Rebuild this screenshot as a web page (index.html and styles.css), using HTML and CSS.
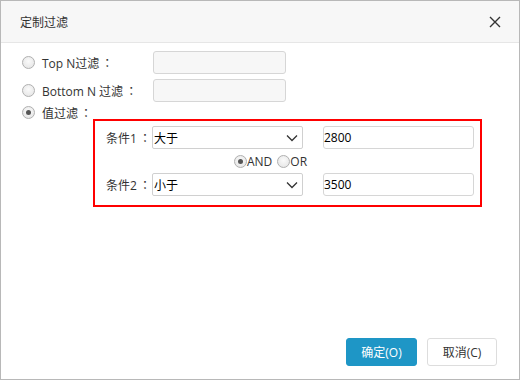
FILE: index.html
```html
<!DOCTYPE html>
<html lang="zh-CN">
<head>
    <meta charset="UTF-8">
    <title>定制过滤</title>
    <link rel="stylesheet" href="styles.css">
</head>
<body>

<div class="dialog">
    <div class="header">
        <span class="title">定制过滤</span>
        <svg class="close" width="12" height="12" viewBox="0 0 12 12">
            <path d="M1 1 L11 11 M11 1 L1 11" stroke="#333" stroke-width="1.4" fill="none"/>
        </svg>
    </div>

    <div class="content">
        <div class="row">
            <span class="radio"></span>
            <span class="label">Top N过滤<span class="colon">：</span></span>
            <input type="text" class="num-input">
        </div>
        <div class="row">
            <span class="radio"></span>
            <span class="label">Bottom N 过滤<span class="colon">：</span></span>
            <input type="text" class="num-input">
        </div>
        <div class="row row-short">
            <span class="radio checked"></span>
            <span class="label">值过滤<span class="colon">：</span></span>
        </div>

        <!-- conditions box -->
        <div class="cond-box">
            <div class="cond-row">
                <span class="cond-label">条件1<span class="colon">：</span></span>
                <div class="select">
                    <span>大于</span>
                    <svg width="12" height="8" viewBox="0 0 12 8"><path d="M1 1.5 L6 6.5 L11 1.5" stroke="#333" stroke-width="1.3" fill="none"/></svg>
                </div>
                <div class="value">2800</div>
            </div>
            <div class="logic-row">
                <span class="radio small checked"></span><span class="logic">AND</span>
                <span class="radio small"></span><span class="logic">OR</span>
            </div>
            <div class="cond-row">
                <span class="cond-label">条件2<span class="colon">：</span></span>
                <div class="select">
                    <span>小于</span>
                    <svg width="12" height="8" viewBox="0 0 12 8"><path d="M1 1.5 L6 6.5 L11 1.5" stroke="#333" stroke-width="1.3" fill="none"/></svg>
                </div>
                <div class="value">3500</div>
            </div>
        </div>
    </div>

    <div class="footer">
        <button class="btn btn-primary">确定(O)</button>
        <button class="btn">取消(C)</button>
    </div>
</div>

</body>
</html>
```

FILE: styles.css
```css
body {
    margin: 0;
    font-family: "Open Sans", "Noto Sans CJK SC", sans-serif;
    font-size: 12px;
    color: #333;
    background: #fff;
}

.dialog {
    width: 520px;
    height: 380px;
    box-sizing: border-box;
    border: 1px solid #b8b8b8;
    display: flex;
    flex-direction: column;
}

.header {
    height: 41px;
    background-color: #f7f7f7;
    border-bottom: 1px solid #e6e6e6;
    display: flex;
    align-items: center;
    justify-content: space-between;
    padding: 0 18px 0 19px;
}

.title {
    margin-top: 1px;
}

.close {
    margin-top: 1px;
}

.content {
    padding: 8px 0 0 20px;
}

.row {
    display: flex;
    align-items: center;
    height: 23px;
    margin-bottom: 5px;
}

.row-short {
    height: 13px;
    margin-top: -1px;
    margin-bottom: 0;
}

.radio {
    width: 11px;
    height: 11px;
    border: 1px solid #b0b0b0;
    border-radius: 50%;
    background: radial-gradient(circle at 50% 40%, #fafafa 0%, #e2e2e2 100%);
    margin: 0 7px 0 1px;
    position: relative;
    flex-shrink: 0;
}

.radio.checked::after {
    content: "";
    position: absolute;
    left: 3px;
    top: 3px;
    width: 5px;
    height: 5px;
    border-radius: 50%;
    background: #555;
}

/* full-width colon sits centred in its cell */
.colon {
    display: inline-block;
    width: 12px;
    text-align: center;
    font-family: "Noto Sans CJK TC", sans-serif;
    padding-left: 2px;
}

.label {
    width: 111px;
}

.num-input {
    width: 133px;
    height: 23px;
    box-sizing: border-box;
    border: 1px solid #d6d6d6;
    border-radius: 3px;
    background-color: #f7f7f7;
    margin: 0;
    padding: 0;
}

.cond-box {
    width: 389px;
    height: 88px;
    box-sizing: border-box;
    margin-left: 72px;
    border: 2px solid #ff0000;
    padding: 5px 0 0 11px;
}

.cond-row {
    display: flex;
    align-items: center;
    height: 23px;
}

.cond-label {
    width: 46px;
}

.select {
    width: 151px;
    height: 23px;
    box-sizing: border-box;
    border: 1px solid #d0d0d0;
    border-radius: 2px;
    background: #fff;
    display: flex;
    align-items: center;
    justify-content: space-between;
    padding: 0 4px 0 1px;
    color: #000;
}

.value {
    width: 151px;
    height: 23px;
    box-sizing: border-box;
    border: 1px solid #d6d6d6;
    border-radius: 3px;
    margin-left: 20px;
    display: flex;
    align-items: center;
    color: #000;
}

.logic-row {
    display: flex;
    align-items: center;
    height: 24px;
    padding-left: 128px;
}

.radio.small {
    margin: 0;
}

.logic {
    margin-right: 5px;
    color: #333;
}

.footer {
    margin-top: auto;
    display: flex;
    justify-content: flex-end;
    gap: 10px;
    padding: 0 22px 13px 0;
}

.btn {
    width: 70px;
    height: 28px;
    border: 1px solid #ddd;
    border-radius: 3px;
    background: #fff;
    color: #333;
    font-family: "Open Sans", "Noto Sans CJK SC", sans-serif;
    font-size: 12px;
    padding: 0;
}

.btn-primary {
    width: 71px;
    background-color: #1e96c6;
    border-color: #1e96c6;
    color: #fff;
}
```
